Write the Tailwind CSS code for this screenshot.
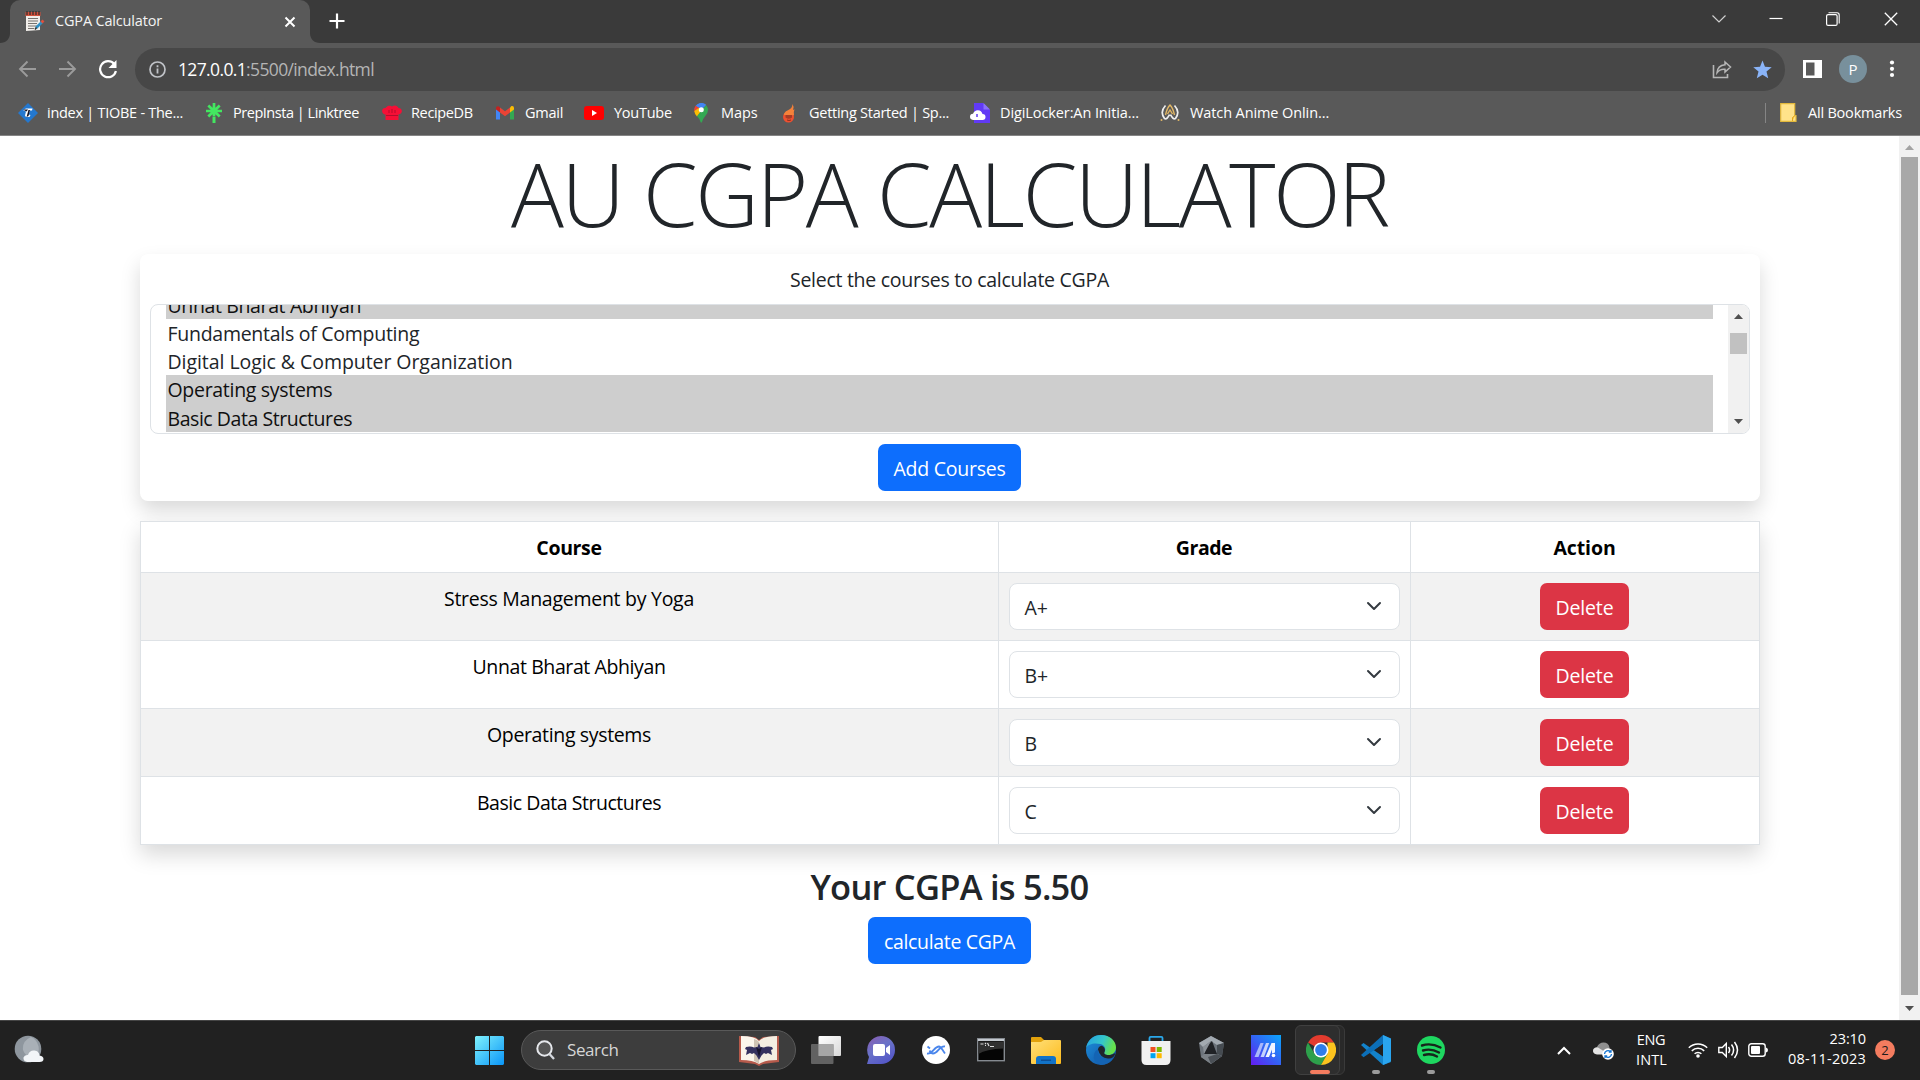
<!DOCTYPE html>
<html lang="en">
<head>
<meta charset="utf-8">
<title>CGPA Calculator</title>
<script src="https://cdn.jsdelivr.net/npm/@tailwindcss/browser@4"></script>
</head>
<body class="w-[1920px] h-[1080px] overflow-hidden flex flex-col bg-white font-['Open_Sans','Noto_Sans',sans-serif]">

<!-- Tab strip -->
<header class="h-[43px] shrink-0 bg-[#3a3a3a] flex items-stretch">
  <svg class="w-[10px] h-[43px]" viewBox="0 0 10 43"><path d="M10 33v10H0c6 0 10-4 10-10z" fill="#595959"/></svg>
  <div class="w-[300px] bg-[#595959] rounded-t-[10px] flex items-center pl-[14px] pr-[13px]">
    <svg class="w-[21px] h-[22px] mb-[2px]" viewBox="0 0 21 22"><path d="M2 4h14v16l-14 1z" fill="#f1eeea"/><path d="M1.500 2h15v4h-15z" fill="#d2513c"/><path d="M3 1v4M6 1v4M9 1v4M12 1v4M15 1v4" stroke="#302c2c" stroke-width="1.200"/><path d="M4 8.500h10M4 11h10M4 13.500h9M4 16h9M4 18.500h6" stroke="#77736f" stroke-width="1"/><path d="M12 18l6-6" stroke="#2f8fc4" stroke-width="2.600"/><path d="M17.500 12.500l2-2" stroke="#e0503c" stroke-width="2.600"/><path d="M11 19.500l1.500-2" stroke="#333" stroke-width="1.500"/></svg>
    <span class="ml-[10px] mb-[2px] text-[14.5px] tracking-[-0.17px] text-[#f3f3f3] whitespace-nowrap">CGPA Calculator</span>
    <svg class="ml-auto w-[14px] h-[14px]" viewBox="0 0 14 14"><path d="M2.500 2.500l9 9M11.500 2.500l-9 9" stroke="#fff" stroke-width="2"/></svg>
  </div>
  <svg class="w-[10px] h-[43px]" viewBox="0 0 10 43"><path d="M0 33v10h10c-6 0-10-4-10-10z" fill="#595959"/></svg>
  <svg class="w-[16px] h-[16px] ml-[9px] mt-[13px]" viewBox="0 0 16 16"><path d="M8 .5v15M.5 8h15" stroke="#fff" stroke-width="2.200"/></svg>
  <div class="ml-auto flex items-center pb-[6px]">
    <svg class="w-[14px] h-[14px] mr-[43px]" viewBox="0 0 14 14"><path d="M.5 3.500L7 10l6.500-6.500" fill="none" stroke="#d0d0d0" stroke-width="1.200"/></svg>
    <svg class="w-[14px] h-[14px] mr-[43px]" viewBox="0 0 14 14"><path d="M.5 6.500h13" stroke="#fff" stroke-width="1.200"/></svg>
    <svg class="w-[14px] h-[14px] mr-[44px]" viewBox="0 0 14 14"><rect x=".6" y="2.600" width="10.500" height="10.800" rx="1.500" fill="none" stroke="#fff" stroke-width="1.200"/><path d="M2.500.8h8.500q2.200 0 2.200 2.200v8.500" fill="none" stroke="#fff" stroke-width="1.100"/></svg>
    <svg class="w-[14px] h-[14px] mr-[22px]" viewBox="0 0 14 14"><path d="M.8.800l12.400 12.400M13.200.800L.8 13.200" stroke="#fff" stroke-width="1.300"/></svg>
  </div>
</header>

<!-- Toolbar -->
<nav class="h-[53px] shrink-0 bg-[#595959] flex items-center pb-[1px]">
  <svg class="ml-[18px] w-[19px] h-[18px]" viewBox="0 0 19 18"><path d="M18 9H2.500M9.500 1.500L2 9l7.500 7.500" fill="none" stroke="#9b9b9b" stroke-width="1.900"/></svg>
  <svg class="ml-[21px] w-[19px] h-[18px]" viewBox="0 0 19 18"><path d="M1 9h15.500M9.500 1.500L17 9l-7.500 7.500" fill="none" stroke="#9b9b9b" stroke-width="1.900"/></svg>
  <svg class="ml-[21px] w-[20px] h-[20px]" viewBox="0 0 20 20"><path d="M16.200 5A8 8 0 1 0 17.900 12" fill="none" stroke="#fff" stroke-width="2.200"/><path d="M18.500 1v8h-8z" fill="#fff"/></svg>
  <div class="ml-[17px] w-[1650px] h-[43px] rounded-full bg-[#474747] flex items-center pl-[14px] pr-[13px]">
    <svg class="w-[17px] h-[17px]" viewBox="0 0 17 17"><circle cx="8.500" cy="8.500" r="7.500" fill="none" stroke="#c0c3c8" stroke-width="1.700"/><path d="M8.500 7.500v5M8.500 4.300v1.900" stroke="#c0c3c8" stroke-width="1.800"/></svg>
    <span class="ml-[12px] mt-[1px] text-[17.5px] tracking-[-0.64px] text-[#b5b5b5] whitespace-nowrap"><span class="text-white">127.0.0.1</span>:5500/index.html</span>
    <svg class="ml-auto w-[20px] h-[19px]" viewBox="0 0 20 19"><path d="M1.500 5v12.500h14V14" fill="none" stroke="#b6b6b6" stroke-width="1.600"/><path d="M13 2l5.500 5-5.500 5V9.300q-5-.6-8 3.500Q5.500 5.500 13 4.800z" fill="none" stroke="#b6b6b6" stroke-width="1.500"/></svg>
    <svg class="ml-[21px] w-[19px] h-[19px]" viewBox="0 0 20 19"><path d="M10 0l2.600 6.600 7.100.5-5.500 4.600L16 18.800 10 15l-6 3.800 1.800-7.100L.3 7.100l7.100-.5z" fill="#8ab4f8"/></svg>
  </div>
  <svg class="ml-[18px] w-[19px] h-[18px]" viewBox="0 0 19 18"><path d="M0 0h19v18H0zM3 2.500v13h8.500v-13z" fill="#fff" fill-rule="evenodd"/></svg>
  <div class="ml-[17px] size-[28px] rounded-full bg-[#78909c] text-white text-[15px] flex items-center justify-center">P</div>
  <svg class="ml-[22px] w-[6px] h-[18px]" viewBox="0 0 6 18"><circle cx="3" cy="2.500" r="2.100" fill="#fff"/><circle cx="3" cy="8.800" r="2.100" fill="#fff"/><circle cx="3" cy="15" r="2.100" fill="#fff"/></svg>
</nav>

<!-- Bookmarks bar -->
<nav class="h-[40px] shrink-0 bg-[#595959] border-b border-[#858585] flex items-center pl-[18px] pb-[6px] text-[14.5px] text-white whitespace-nowrap">
  <a class="w-[186px] flex items-center gap-[9px] tracking-[-0.27px]"><svg class="size-5" viewBox="0 0 20 20"><path d="M10 0l10 10-10 10L0 10z" fill="#2478cf"/><path d="M5 7l3-1.500h6.500L14 7.500h-2l-1.500 4 2 .5-1 2H8l-1-1.500 1-4z" fill="#fff"/><path d="M5 6.500h5l-1.500 2z" fill="#112"/><path d="M8.500 14l2-7H12l-1.500 6z" fill="#112"/></svg>index | TIOBE - The...</a>
  <a class="w-[178px] flex items-center gap-[9px] tracking-[-0.47px]"><svg class="size-5" viewBox="0 0 20 20"><path d="M10 0v13M2 8h16M4.300 2.500L15.700 13.500M15.700 2.500L4.300 13.500" stroke="#43e660" stroke-width="2.700"/><path d="M10 13.500V20" stroke="#43e660" stroke-width="3"/></svg>PrepInsta | Linktree</a>
  <a class="w-[113px] flex items-center gap-[9px] tracking-[-0.35px]"><svg class="size-5" viewBox="0 0 20 20"><path d="M3.500 17v-5.500C-1 11 -1 4.500 3.500 5 6 1.500 9 3 10 3.500 13 1.500 15.500 3 16.500 5c4.500 0 4.500 6 0 6.500V17z" fill="#f50f36"/><path d="M4 12.500h12M7 7v3M10 6v4M13 7v3" stroke="#b30d2c" stroke-width="1"/></svg>RecipeDB</a>
  <a class="w-[89px] flex items-center gap-[10px] tracking-[-0.25px]"><svg class="size-5" viewBox="0 0 20 20"><path d="M1 5v11.500h4V8z" fill="#4285f4"/><path d="M19 5v11.500h-4V8z" fill="#34a853"/><path d="M15 4.500V9.500l4-3V5q0-2.500-2.500-2z" fill="#fbbc04"/><path d="M1 6.500l4 3v-5L3.500 3.300Q1 3 1 5z" fill="#c5221f"/><path d="M5 4.500l5 3.700 5-3.700v5L10 13.200 5 9.500z" fill="#ea4335"/></svg>Gmail</a>
  <a class="w-[107px] flex items-center gap-[10px] tracking-[-0.25px]"><svg class="size-5" viewBox="0 0 20 20"><rect y="3" width="20" height="14" rx="3" fill="#f00"/><path d="M8 7v6l5-3z" fill="#fff"/></svg>YouTube</a>
  <a class="w-[88px] flex items-center gap-[10px] tracking-[-0.1px]"><svg class="size-5" viewBox="0 0 20 20"><path d="M4.500 3L10 7l5-5.200A7 7 0 0 0 4.500 3z" fill="#4285f4"/><path d="M4.500 2.700A7 7 0 0 0 3.500 9l5-4z" fill="#ea4335"/><path d="M3.300 8Q3.500 11 6 13.500L13 5 8.500 4.500z" fill="#fbbc04"/><path d="M15 2q4 5 0 10-3 3.500-4.200 7.500h-1Q9 16 6 13.300z" fill="#34a853"/><path d="M8 .4Q12-.5 15 2l-3 3-4 0z" fill="#4285f4"/><circle cx="10.300" cy="6.800" r="2.500" fill="#fff"/></svg>Maps</a>
  <a class="w-[191px] flex items-center gap-[10px] tracking-[-0.27px]"><svg class="size-5" viewBox="0 0 20 20"><circle cx="9.500" cy="14" r="5.500" fill="#ee5030"/><path d="M5 12q0-3 3.500-4.500 5-2 5-6.500 2 3 .5 6l1.500-.8q-1 2-.5 6z" fill="#f5813a"/><path d="M6.500 12h6.500v2.500q-3.200 2.500-6.500 0z" fill="#a63c25"/><path d="M8 17q2 1 4 0" stroke="#8b3020" fill="none"/></svg>Getting Started | Sp...</a>
  <a class="w-[190px] flex items-center gap-[10px] tracking-[-0.1px]"><svg class="size-5" viewBox="0 0 20 20"><path d="M4 0h9l7 7v13H4z" fill="#613af5"/><path d="M13.500 0v6.500H20z" fill="#8a70f8"/><path d="M3 17q-3-.5-3-3.200Q0 11 3 10.800 4.500 7 8 7.200 11.500 7.500 12.500 11q3 .2 3 3t-3 3z" fill="#fff"/><path d="M7 11v3" stroke="#613af5" stroke-width="1.500"/></svg>DigiLocker:An Initia...</a>
  <a class="flex items-center gap-[10px] tracking-[-0.1px]"><svg class="size-5" viewBox="0 0 20 20"><path d="M5.500 2.500Q-.5 9 4.500 15.500 7 17 9.500 11.500M14.500 2.500q6 6.500 1 13Q13 17 10.500 11.500" fill="none" stroke="#eee" stroke-width="1.700"/><path d="M5.500 12Q7 5 10 2q3 3 4.500 10M7.500 11L10 7l2.500 4" stroke="#e3b866" stroke-width="1.400" fill="none"/><circle cx="1.500" cy="17" r="1" fill="#e3b866"/><circle cx="18.500" cy="17" r="1" fill="#e3b866"/></svg>Watch Anime Onlin...</a>
  <div class="ml-auto mr-[18px] flex items-center tracking-[-0.2px]"><div class="w-px h-5 bg-[#858585] mr-[14px]"></div><svg class="w-[17px] h-[19px] mr-[11px]" viewBox="0 0 17 19"><path d="M.7.700h14v11.800h1.300v5.800H.7z" fill="#ffe38a" stroke="#e3b93c" stroke-width="1.200"/><path d="M12.500 18v-3.500l2.500-2" fill="#f7c33b" stroke="#e3a91c"/></svg>All Bookmarks</div>
</nav>

<!-- Page -->
<div class="h-[884px] shrink-0 flex">
  <main class="w-[1899px] px-[139.5px] flex flex-col items-center text-[19.5px] text-[#212529]">
    <h1 class="h-[118px] text-[88px] leading-[115px] font-light tracking-[-2.3px] whitespace-nowrap">AU CGPA CALCULATOR</h1>

    <section class="w-[1620px] h-[247px] rounded-lg shadow-[0_10px_20px_rgba(0,0,0,0.15)] bg-white px-[10px] pt-[10px] flex flex-col items-center">
      <p class="h-[40px] leading-[31px] tracking-[-0.27px]">Select the courses to calculate CGPA</p>
      <div class="w-[1600px] h-[130px] border border-[#dee2e6] rounded-[8px] overflow-hidden flex pl-[15px]">
        <div class="w-[1547px] h-[127px] overflow-hidden flex flex-col justify-end leading-[29px] [&>div]:pl-[2px] [&>div]:shrink-0">
          <div class="h-[28px] bg-[#cecece] text-[#101010] tracking-[-0.37px]">Unnat Bharat Abhiyan</div>
          <div class="h-[28px] tracking-[-0.27px]">Fundamentals of Computing</div>
          <div class="h-[28px] tracking-[-0.06px]">Digital Logic &amp; Computer Organization</div>
          <div class="h-[28px] bg-[#cecece] text-[#101010] tracking-[-0.3px]">Operating systems</div>
          <div class="h-[29px] bg-[#cecece] text-[#101010] leading-[31px] tracking-[-0.45px]">Basic Data Structures</div>
        </div>
        <div class="ml-auto w-[21px] h-[128px] bg-[#f1f1f1] flex flex-col items-center pt-[9px] pb-[9px]">
          <svg class="w-[9px] h-[5px]" viewBox="0 0 9 5"><path d="M0 5L4.500 0 9 5z" fill="#505050"/></svg>
          <div class="w-[17px] h-[21px] mt-[14px] bg-[#c1c1c1]"></div>
          <svg class="w-[9px] h-[5px] mt-auto" viewBox="0 0 9 5"><path d="M0 0l4.500 5L9 0z" fill="#505050"/></svg>
        </div>
      </div>
      <button class="mt-[10px] w-[143px] h-[47px] rounded-[7px] bg-[#0d6efd] text-white tracking-[-0.25px] pt-[3px]">Add Courses</button>
    </section>

    <table class="mt-[20px] w-[1620px] h-[324px] table-fixed border-collapse bg-white text-black text-center shadow-[0_10px_20px_rgba(0,0,0,0.15)] [&_td]:border [&_th]:border [&_td]:border-[#dee2e6] [&_th]:border-[#dee2e6] [&_td]:p-0 [&_th]:px-0 [&_th]:pb-0 [&_th]:pt-[2px] [&_td]:align-top">
      <colgroup><col class="w-[858px]"><col class="w-[412px]"><col></colgroup>
      <thead><tr class="h-[51px]"><th class="font-bold tracking-[-0.35px]">Course</th><th class="font-bold tracking-[-0.45px]">Grade</th><th class="font-bold tracking-[-0.1px]">Action</th></tr></thead>
      <tbody class="[&>tr]:h-[68px] [&>tr:nth-child(odd)]:bg-[#f2f2f2]">
        <tr><td><div class="pt-[11px] leading-[30px] tracking-[-0.27px]">Stress Management by Yoga</div></td>
          <td><div class="mx-[10px] mt-[10px] h-[47px] border border-[#dee2e6] rounded-[8px] bg-white flex items-center justify-between pl-[15px] pr-[17px] text-[#212529]"><span class="pt-[3px]">A+</span><svg class="size-4 mb-[1px]" viewBox="0 0 16 16"><path d="M2 5l6 6 6-6" fill="none" stroke="#343a40" stroke-width="2" stroke-linecap="round" stroke-linejoin="round"/></svg></div></td>
          <td><button class="mt-[10px] w-[89px] h-[47px] rounded-[7px] bg-[#dc3545] text-white tracking-[-0.15px] pt-[2px]">Delete</button></td></tr>
        <tr><td><div class="pt-[11px] leading-[30px] tracking-[-0.4px]">Unnat Bharat Abhiyan</div></td>
          <td><div class="mx-[10px] mt-[10px] h-[47px] border border-[#dee2e6] rounded-[8px] bg-white flex items-center justify-between pl-[15px] pr-[17px] text-[#212529]"><span class="pt-[3px]">B+</span><svg class="size-4 mb-[1px]" viewBox="0 0 16 16"><path d="M2 5l6 6 6-6" fill="none" stroke="#343a40" stroke-width="2" stroke-linecap="round" stroke-linejoin="round"/></svg></div></td>
          <td><button class="mt-[10px] w-[89px] h-[47px] rounded-[7px] bg-[#dc3545] text-white tracking-[-0.15px] pt-[2px]">Delete</button></td></tr>
        <tr><td><div class="pt-[11px] leading-[30px] tracking-[-0.35px]">Operating systems</div></td>
          <td><div class="mx-[10px] mt-[10px] h-[47px] border border-[#dee2e6] rounded-[8px] bg-white flex items-center justify-between pl-[15px] pr-[17px] text-[#212529]"><span class="pt-[3px]">B</span><svg class="size-4 mb-[1px]" viewBox="0 0 16 16"><path d="M2 5l6 6 6-6" fill="none" stroke="#343a40" stroke-width="2" stroke-linecap="round" stroke-linejoin="round"/></svg></div></td>
          <td><button class="mt-[10px] w-[89px] h-[47px] rounded-[7px] bg-[#dc3545] text-white tracking-[-0.15px] pt-[2px]">Delete</button></td></tr>
        <tr><td><div class="pt-[11px] leading-[30px] tracking-[-0.47px]">Basic Data Structures</div></td>
          <td><div class="mx-[10px] mt-[10px] h-[47px] border border-[#dee2e6] rounded-[8px] bg-white flex items-center justify-between pl-[15px] pr-[17px] text-[#212529]"><span class="pt-[3px]">C</span><svg class="size-4 mb-[1px]" viewBox="0 0 16 16"><path d="M2 5l6 6 6-6" fill="none" stroke="#343a40" stroke-width="2" stroke-linecap="round" stroke-linejoin="round"/></svg></div></td>
          <td><button class="mt-[10px] w-[89px] h-[47px] rounded-[7px] bg-[#dc3545] text-white tracking-[-0.15px] pt-[2px]">Delete</button></td></tr>
      </tbody>
    </table>

    <h2 class="mt-[20px] h-[52px] text-[34.5px] leading-[44px] font-semibold tracking-[-0.77px]">Your CGPA is 5.50</h2>
    <button class="w-[163px] h-[47px] rounded-[7px] bg-[#0d6efd] text-white tracking-[-0.33px] pt-[2px]">calculate CGPA</button>
  </main>
  <div class="w-[21px] bg-[#f1f1f1] flex flex-col items-center pt-[9px] pb-[9px]">
    <svg class="w-[9px] h-[5px]" viewBox="0 0 9 5"><path d="M0 5L4.500 0 9 5z" fill="#a3a3a3"/></svg>
    <div class="w-[17px] h-[838px] mt-[7px] bg-[#a8a8a8]"></div>
    <svg class="w-[9px] h-[5px] mt-auto" viewBox="0 0 9 5"><path d="M0 0l4.500 5L9 0z" fill="#505050"/></svg>
  </div>
</div>

<!-- Taskbar -->
<footer class="h-[60px] shrink-0 bg-[#212121] border-t border-[#454545] flex items-center pb-[1px] text-white">
  <svg class="ml-[14px] size-[30px]" viewBox="0 0 30 30"><circle cx="14" cy="14" r="13.300" fill="#8e969e"/><path d="M17 2q-9 4-8 13 2 7 12 8a13 13 0 0 0-4-21z" fill="#a9b0b7"/><path d="M13 27q-4-1-3.500-4.500 1-3 4.500-2.500 1.500-5 6.500-4.500 4.500.5 5 5 4 .5 4 3.500t-4 3z" fill="#f2f5f8"/></svg>
  <svg class="ml-[431px] size-[29px]" viewBox="0 0 29 29"><defs><linearGradient id="win" x1="0" y1="0" x2="1" y2="1"><stop stop-color="#7ff2fd"/><stop offset="1" stop-color="#0a95f7"/></linearGradient></defs><path d="M1 0h13v14H0V1zM15 0h13l1 1v13H15zM0 15h14v14H1l-1-1zM15 15h14v13l-1 1H15z" fill="url(#win)"/></svg>
  <div class="ml-[17px] w-[275px] h-[40px] rounded-full border border-[#595959] bg-[#3d3d3d] flex items-center pl-[14px] pr-[16px]">
    <svg class="w-[19px] h-[20px]" viewBox="0 0 19 20"><circle cx="8.500" cy="8.500" r="7.200" fill="#555" stroke="#e6e8ec" stroke-width="2"/><path d="M13.500 14l4.500 5" stroke="#d4d8de" stroke-width="2.300"/></svg>
    <span class="ml-[12px] text-[17px] tracking-[-0.4px] text-[#d6d6d6]">Search</span>
    <svg class="ml-auto w-[40px] h-[31px]" viewBox="0 0 40 31"><path d="M0 1l16 1 4 3 4-3 16-1v26l-16 2-4 2-4-2-16-2z" fill="#b65a4b"/><path d="M2 1q14 0 18 5v23q-6-4-18-4z" fill="#fbf6ec"/><path d="M38 1Q24 1 20 6v23q6-4 18-4z" fill="#f4eee2"/><path d="M15 4q4 1 5 3v22q-2-2-5-3z" fill="#cfc4b4"/><path d="M20 8l1.500 4 3.500.5q3-1.500 8-.5l1 2-2 1 1 5-4-2-2 1-2-1-2.500 2.500L20 25l-2.500-4.500L15 18l-2 1-2-1-4 2 1-5-2-1 1-2q5-1 8 .5l3.500-.5z" fill="#34315f"/><path d="M17 12l3 2 3-2-3 10z" fill="#17142e"/></svg>
  </div>
  <div class="flex items-center ml-[2px] [&>div]:w-[55px] [&>div]:h-[50px] [&>div]:flex [&>div]:items-center [&>div]:justify-center [&_svg]:size-[30px]">
    <div><svg viewBox="0 0 30 30"><defs><linearGradient id="tv" x1="0" y1="0" x2="1" y2="1"><stop stop-color="#fff"/><stop offset="1" stop-color="#d8d8d8"/></linearGradient></defs><rect x="7.500" y="1" width="22.500" height="20" rx="1" fill="url(#tv)"/><rect y="9" width="22.500" height="20" rx="1" fill="#6d6d6d" fill-opacity=".85"/><path d="M7.500 9h15v12h-15z" fill="#a6a6a6"/></svg></div>
    <div><svg viewBox="0 0 30 30"><defs><linearGradient id="ch" x1="0" y1="0" x2=".6" y2="1"><stop stop-color="#8c5cb0"/><stop offset=".5" stop-color="#6a72c8"/><stop offset="1" stop-color="#5558c8"/></linearGradient></defs><path d="M15 1a14 14 0 1 1 0 28H1l2-7A14 14 0 0 1 15 1z" fill="url(#ch)"/><rect x="7" y="9" width="12" height="12" rx="2" fill="#fff"/><path d="M20 13l4-3v10l-4-3z" fill="#fff"/></svg></div>
    <div><svg viewBox="0 0 30 30"><circle cx="15" cy="15" r="14" fill="#fff"/><path d="M6 18.500c6 1 7-7 12-7 2 0 3 3 6 7M24 11.500c-6-1-7 7-12 7-1.500 0-2.500-1-3.500-3M6.500 11.500l2.500 2" fill="none" stroke="#4a86ec" stroke-width="1.800"/></svg></div>
    <div><svg viewBox="0 0 30 30"><rect x="1.700" y="3.700" width="26.600" height="22" fill="#050505" stroke="#858a90" stroke-width="1.400"/><path d="M2 4h26v2H2z" fill="#c2c7cd"/><path d="M2.500 6.500h25v7Q10 14 2.500 19z" fill="#303030"/><path d="M4.500 9h3M9 8l1 1M9 10.500l1 0M11.500 8l1.500 3M14 11.500h4" stroke="#ddd" stroke-width="1.200"/></svg></div>
    <div><svg viewBox="0 0 30 30"><defs><linearGradient id="fo" x1="0" y1="0" x2="1" y2="1"><stop stop-color="#ffe07a"/><stop offset="1" stop-color="#fdbb1c"/></linearGradient></defs><path d="M0 3q0-1 1-1h9l3 3v5H0z" fill="#e2a20c"/><path d="M0 7h10l3-2h16q1 0 1 1v22q0 1-1 1H1q-1 0-1-1z" fill="url(#fo)"/><path d="M5 29v-5q0-3 3-3h14q3 0 3 3v5z" fill="#1273c8"/><path d="M10 24.500h10v1.500H10z" fill="#0c4f97"/></svg></div>
    <div><svg viewBox="0 0 30 30"><defs><linearGradient id="ed" x1="0" y1="0" x2="1" y2=".3"><stop stop-color="#259fe5"/><stop offset=".6" stop-color="#35c7c9"/><stop offset="1" stop-color="#66e04c"/></linearGradient><linearGradient id="ed2" x1="0" y1="0" x2="1" y2="1"><stop stop-color="#1d90dd"/><stop offset="1" stop-color="#114e9e"/></linearGradient></defs><circle cx="15" cy="15" r="15" fill="url(#ed2)"/><path d="M0 13C2 4 8 0 15 0c9 0 15 6 15 12.500 0 5-4 7.500-7.500 7.500-4 0-5-1.500-4-3 2-3 0-7-4-8C8 7.500 2 9 0 13z" fill="url(#ed)"/><path d="M12 14.500c0-2 1.500-3.500 3.500-3.800C19 12 19.500 15 18.500 17c-1 2 1 3 4 3 2.500 0 4.500-.5 6-2l.5 1.500Q27 24 22 23.500 14 23 12 14.500z" fill="#20242b"/><path d="M12 14c-.5 7 5 11 10 10.500 3-.3 4-1 5.500-1.500Q23 30 15 30 6 27 8 19q1-3.500 4-5z" fill="#1464b4"/></svg></div>
    <div><svg viewBox="0 0 30 30"><path d="M8.500 7V3q0-1.200 1.200-1.200h10.600Q21.500 1.800 21.500 3v4" fill="none" stroke="#2aa8ea" stroke-width="1.800"/><path d="M.5 6h29v19q0 5-5 5h-19q-5 0-5-5z" fill="#f1f1f1"/><path d="M9.500 12h5v5h-5z" fill="#f25022"/><path d="M15.700 12h5v5h-5z" fill="#7fba00"/><path d="M9.500 18.200h5v5h-5z" fill="#00a4ef"/><path d="M15.700 18.200h5v5h-5z" fill="#ffb900"/></svg></div>
    <div><svg viewBox="0 0 30 30"><path d="M15 1l13 7-2 13-11 8-10-7L3 8z" fill="#6c737b"/><path d="M15 1l13 7-7 2-6-4-8 6-4-4z" fill="#a3aab1"/><path d="M28 8l-2 13-5-2V10z" fill="#454b51"/><path d="M5 22l3-3 13 0 5 2-11 8z" fill="#7b8187"/><path d="M16 6l5 13H8q2-8 8-13z" fill="#202226"/><path d="M15 29l-3-7 9-3 5 2z" fill="#4b5056"/><path d="M15 6l-8 6 1 7z" fill="#8b9198"/></svg></div>
    <div><svg viewBox="0 0 30 30"><defs><linearGradient id="my" x1="1" y1="0" x2="0" y2="1"><stop stop-color="#0aa6fb"/><stop offset=".6" stop-color="#3c55f3"/><stop offset="1" stop-color="#651bf2"/></linearGradient></defs><path d="M0 0h30v30H0z" fill="url(#my)"/><path d="M9.500 8h3.200L7.500 22H3.500z" fill="#a9b8fb"/><path d="M15 8h3.200l-5.200 14H9.500z" fill="#c5d2fd"/><path d="M20.500 8h3.500v9.500l-3 1v-4L18 22h-3.500z" fill="#f0f5ff"/><circle cx="22.500" cy="20.500" r="1.800" fill="#fff"/></svg></div>
    <div class="relative"><div class="absolute left-[6px] top-0 w-[46px] h-[50px] rounded-[6px] border border-[#3a3a3a] bg-[#292929]"></div><div class="absolute left-[2px] top-0 w-[45px] h-[50px] rounded-[6px] border border-[#404040] bg-[#2e2e2e]"></div>
      <svg class="relative" viewBox="0 0 30 30"><path d="M15 15L2 7.500A15 15 0 0 1 28 7.500H15z" fill="#e33b2e"/><path d="M2 7.500A15 15 0 0 0 15 30l6.500-11.300L15 15 8.500 18.700z" fill="#2da04b"/><path d="M28 7.500A15 15 0 0 1 15 30l6.500-11.300V7.500z" fill="#fcc31e"/><circle cx="15" cy="15" r="7.500" fill="#fff"/><circle cx="15" cy="15" r="5.900" fill="#2f7de9"/></svg>
      <div class="absolute left-[17px] bottom-px w-[20px] h-[4px] rounded-full bg-[#f47c5f]"></div></div>
    <div class="relative"><svg viewBox="0 0 30 30"><path d="M0 10l2.500-2L30 27l-8 3z" fill="#1383cb"/><path d="M0 20l2.500 2.300L30 4l-8-4z" fill="#0c6fb8"/><path d="M22 0l8 3.500v23L22 30z" fill="#2aa5ef"/><path d="M22 9v12l-8-6z" fill="#212121"/></svg><div class="absolute left-[24px] bottom-px w-[8px] h-[4px] rounded-full bg-[#9b9b9b]"></div></div>
    <div class="relative"><svg viewBox="0 0 30 30"><circle cx="15" cy="15" r="14" fill="#1ed760"/><path d="M6 10.500q9-3 18.500 2M7 15.500q8-2.500 16 2M8 20q7-2 13 1.500" fill="none" stroke="#16261b" stroke-width="2.400" stroke-linecap="round"/></svg><div class="absolute left-[24px] bottom-px w-[8px] h-[4px] rounded-full bg-[#9b9b9b]"></div></div>
  </div>
  <div class="ml-auto flex items-center mr-[25px] text-[14.5px] leading-[20px]">
    <svg class="w-[14px] h-[9px] mr-[22px]" viewBox="0 0 14 9"><path d="M1 8l6-6 6 6" fill="none" stroke="#fff" stroke-width="2"/></svg>
    <svg class="w-[21px] h-[18px] mr-[22px] mt-[2px]" viewBox="0 0 21 18"><path d="M4 12Q0 11.500 0 8.500 0 5.500 4 5 6 .5 10.500.5q5 0 6 5v6z" fill="#909090"/><path d="M4 12.500Q0 12 0 8.500 1 5 5 5.500l8 5v2z" fill="#e4e4e4"/><circle cx="15" cy="12" r="5.800" fill="#fff"/><path d="M11.500 12a3.500 3.500 0 0 1 6-2.300M18.500 12a3.500 3.500 0 0 1-6 2.300M18 8v2.200h-2.200M12 16v-2.200h2.200" fill="none" stroke="#1373d0" stroke-width="1.300"/></svg>
    <div class="w-[30px] text-center tracking-[-0.3px]">ENG<br><span class="tracking-[0.1px]">INTL</span></div>
    <svg class="w-[20px] h-[16px] ml-[22px]" viewBox="0 0 20 16"><path d="M.8 5.800a13 13 0 0 1 18.400 0M3.800 8.900a8.800 8.800 0 0 1 12.400 0M6.600 11.800a4.800 4.800 0 0 1 6.800 0" fill="none" stroke="#fff" stroke-width="1.500"/><circle cx="10" cy="14" r="1.800" fill="#fff"/></svg>
    <svg class="w-[21px] h-[18px] ml-[10px]" viewBox="0 0 21 18"><path d="M.8 6.500h3.500l4-4v13l-4-4H.8z" fill="none" stroke="#fff" stroke-width="1.400"/><path d="M10.500 6q2.200 3 0 6M13.500 3.500q4.200 5.500 0 11M16.500 1q6 8 0 16" fill="none" stroke="#fff" stroke-width="1.500"/></svg>
    <svg class="w-[20px] h-[14px] ml-[9px]" viewBox="0 0 20 14"><rect x=".8" y=".8" width="16.400" height="12.400" rx="2.500" fill="none" stroke="#fff" stroke-width="1.400"/><rect x="3" y="3" width="9" height="8" rx="1" fill="#fff"/><path d="M18 4.500q2 .5 2 2.500t-2 2.500z" fill="#fff"/></svg>
    <div class="w-[78px] ml-[20px] mb-[2px] text-right whitespace-nowrap tracking-[0.23px]"><span class="tracking-[-0.1px]">23:10</span><br>08-11-2023</div>
    <div class="ml-[9px] size-[20px] rounded-full bg-[#f47c5f] text-[#1c1c1c] text-[13px] flex items-center justify-center">2</div>
  </div>
</footer>
</body>
</html>
